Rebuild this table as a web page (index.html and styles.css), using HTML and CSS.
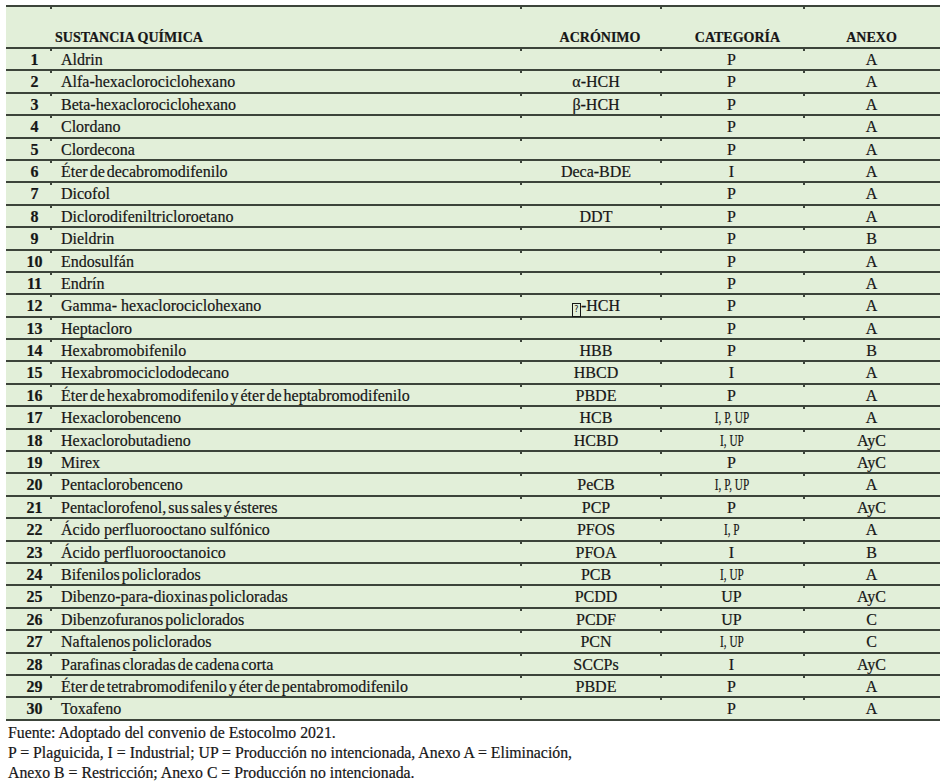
FILE: index.html
```html
<!DOCTYPE html>
<html lang="es">
<head>
<meta charset="utf-8">
<title>Sustancias químicas - Convenio de Estocolmo</title>
<link rel="stylesheet" href="styles.css">
</head>
<body>
<div class="table">
  <div class="row head">
    <div class="c num"></div>
    <div class="c name">SUSTANCIA QUÍMICA</div>
    <div class="c acr">ACRÓNIMO</div>
    <div class="c cat">CATEGORÍA</div>
    <div class="c anx">ANEXO</div>
  </div>
  <div class="row"><div class="c num">1</div><div class="c name">Aldrin</div><div class="c acr"></div><div class="c cat">P</div><div class="c anx">A</div></div>
  <div class="row"><div class="c num">2</div><div class="c name">Alfa-hexaclorociclohexano</div><div class="c acr">α-HCH</div><div class="c cat">P</div><div class="c anx">A</div></div>
  <div class="row"><div class="c num">3</div><div class="c name">Beta-hexaclorociclohexano</div><div class="c acr">β-HCH</div><div class="c cat">P</div><div class="c anx">A</div></div>
  <div class="row"><div class="c num">4</div><div class="c name">Clordano</div><div class="c acr"></div><div class="c cat">P</div><div class="c anx">A</div></div>
  <div class="row"><div class="c num">5</div><div class="c name">Clordecona</div><div class="c acr"></div><div class="c cat">P</div><div class="c anx">A</div></div>
  <div class="row"><div class="c num">6</div><div class="c name tight">Éter de decabromodifenilo</div><div class="c acr">Deca-BDE</div><div class="c cat">I</div><div class="c anx">A</div></div>
  <div class="row"><div class="c num">7</div><div class="c name">Dicofol</div><div class="c acr"></div><div class="c cat">P</div><div class="c anx">A</div></div>
  <div class="row"><div class="c num">8</div><div class="c name">Diclorodifeniltricloroetano</div><div class="c acr">DDT</div><div class="c cat">P</div><div class="c anx">A</div></div>
  <div class="row"><div class="c num">9</div><div class="c name">Dieldrin</div><div class="c acr"></div><div class="c cat">P</div><div class="c anx">B</div></div>
  <div class="row"><div class="c num">10</div><div class="c name">Endosulfán</div><div class="c acr"></div><div class="c cat">P</div><div class="c anx">A</div></div>
  <div class="row"><div class="c num">11</div><div class="c name">Endrín</div><div class="c acr"></div><div class="c cat">P</div><div class="c anx">A</div></div>
  <div class="row"><div class="c num">12</div><div class="c name">Gamma- hexaclorociclohexano</div><div class="c acr"><span class="box">?</span>-HCH</div><div class="c cat">P</div><div class="c anx">A</div></div>
  <div class="row"><div class="c num">13</div><div class="c name">Heptacloro</div><div class="c acr"></div><div class="c cat">P</div><div class="c anx">A</div></div>
  <div class="row"><div class="c num">14</div><div class="c name">Hexabromobifenilo</div><div class="c acr">HBB</div><div class="c cat">P</div><div class="c anx">B</div></div>
  <div class="row"><div class="c num">15</div><div class="c name">Hexabromociclododecano</div><div class="c acr">HBCD</div><div class="c cat">I</div><div class="c anx">A</div></div>
  <div class="row"><div class="c num">16</div><div class="c name tight">Éter de hexabromodifenilo y éter de heptabromodifenilo</div><div class="c acr">PBDE</div><div class="c cat">P</div><div class="c anx">A</div></div>
  <div class="row"><div class="c num">17</div><div class="c name">Hexaclorobenceno</div><div class="c acr">HCB</div><div class="c cat"><span class="narrow">I, P, UP</span></div><div class="c anx">A</div></div>
  <div class="row"><div class="c num">18</div><div class="c name">Hexaclorobutadieno</div><div class="c acr">HCBD</div><div class="c cat"><span class="narrow">I, UP</span></div><div class="c anx">AyC</div></div>
  <div class="row"><div class="c num">19</div><div class="c name">Mirex</div><div class="c acr"></div><div class="c cat">P</div><div class="c anx">AyC</div></div>
  <div class="row"><div class="c num">20</div><div class="c name">Pentaclorobenceno</div><div class="c acr">PeCB</div><div class="c cat"><span class="narrow">I, P, UP</span></div><div class="c anx">A</div></div>
  <div class="row"><div class="c num">21</div><div class="c name tight">Pentaclorofenol, sus sales y ésteres</div><div class="c acr">PCP</div><div class="c cat">P</div><div class="c anx">AyC</div></div>
  <div class="row"><div class="c num">22</div><div class="c name">Ácido perfluorooctano sulfónico</div><div class="c acr">PFOS</div><div class="c cat"><span class="narrow">I, P</span></div><div class="c anx">A</div></div>
  <div class="row"><div class="c num">23</div><div class="c name">Ácido perfluorooctanoico</div><div class="c acr">PFOA</div><div class="c cat">I</div><div class="c anx">B</div></div>
  <div class="row"><div class="c num">24</div><div class="c name tight">Bifenilos policlorados</div><div class="c acr">PCB</div><div class="c cat"><span class="narrow">I, UP</span></div><div class="c anx">A</div></div>
  <div class="row"><div class="c num">25</div><div class="c name tight">Dibenzo-para-dioxinas policloradas</div><div class="c acr">PCDD</div><div class="c cat">UP</div><div class="c anx">AyC</div></div>
  <div class="row"><div class="c num">26</div><div class="c name tight">Dibenzofuranos policlorados</div><div class="c acr">PCDF</div><div class="c cat">UP</div><div class="c anx">C</div></div>
  <div class="row"><div class="c num">27</div><div class="c name tight">Naftalenos policlorados</div><div class="c acr">PCN</div><div class="c cat"><span class="narrow">I, UP</span></div><div class="c anx">C</div></div>
  <div class="row"><div class="c num">28</div><div class="c name tight">Parafinas cloradas de cadena corta</div><div class="c acr">SCCPs</div><div class="c cat">I</div><div class="c anx">AyC</div></div>
  <div class="row"><div class="c num">29</div><div class="c name tight">Éter de tetrabromodifenilo y éter de pentabromodifenilo</div><div class="c acr">PBDE</div><div class="c cat">P</div><div class="c anx">A</div></div>
  <div class="row"><div class="c num">30</div><div class="c name">Toxafeno</div><div class="c acr"></div><div class="c cat">P</div><div class="c anx">A</div></div>
</div>
<div class="notes">
  <p>Fuente: Adoptado del convenio de Estocolmo 2021.</p>
  <p>P = Plaguicida, I = Industrial; UP = Producción no intencionada, Anexo A = Eliminación,</p>
  <p>Anexo B = Restricción; Anexo C = Producción no intencionada.</p>
</div>
</body>
</html>
```
FILE: styles.css
```css
html, body {
  margin: 0;
  padding: 0;
  background: #ffffff;
}
body {
  font-family: "Liberation Serif", "DejaVu Serif", serif;
  color: #161616;
  padding: 5px 3px 0 6px;
  -webkit-text-stroke: 0.2px #161616;
}
.table {
  width: 934px;
  background: #e2efd9;
  border-top: 2px solid #3c443a;
}
.row {
  display: grid;
  grid-template-columns: 44px 470px 140px 143px 137px;
  height: 22.4px;
  box-sizing: border-box;
  border-bottom: 2px solid #3c443a;
  font-size: 16px;
  line-height: 22px;
}
.row.head {
  height: 42px;
  font-weight: bold;
  font-size: 14px;
  line-height: 16px;
}
.head .c {
  padding-top: 23px;
}
.c {
  position: relative;
  white-space: nowrap;
}
.c + .c::before {
  content: "";
  position: absolute;
  left: 0;
  top: 0;
  width: 1.5px;
  height: 2px;
  background: #3c443a;
}
.num {
  text-align: center;
  padding-left: 13px;
  font-weight: bold;
}
.name {
  padding-left: 11px;
}
.head .name {
  padding-left: 5px;
}
.tight {
  word-spacing: -2px;
}
.acr {
  text-align: center;
  padding-left: 12px;
}
.head .acr {
  padding-left: 20px;
}
.cat {
  text-align: center;
}
.head .cat {
  padding-left: 12px;
}
.anx {
  text-align: center;
}
.narrow {
  display: inline-block;
  transform: scaleX(0.66);
  font-size: 17px;
}
.box {
  display: inline-block;
  width: 7px;
  height: 12px;
  border: 1px solid #161616;
  font-size: 8px;
  line-height: 12px;
  text-align: center;
  vertical-align: -1px;
  font-family: "DejaVu Sans", sans-serif;
  -webkit-text-stroke: 0;
}
.notes {
  padding-left: 2px;
  padding-top: 2px;
  font-size: 15.8px;
  line-height: 20px;
}
.notes p {
  margin: 0;
}
```
